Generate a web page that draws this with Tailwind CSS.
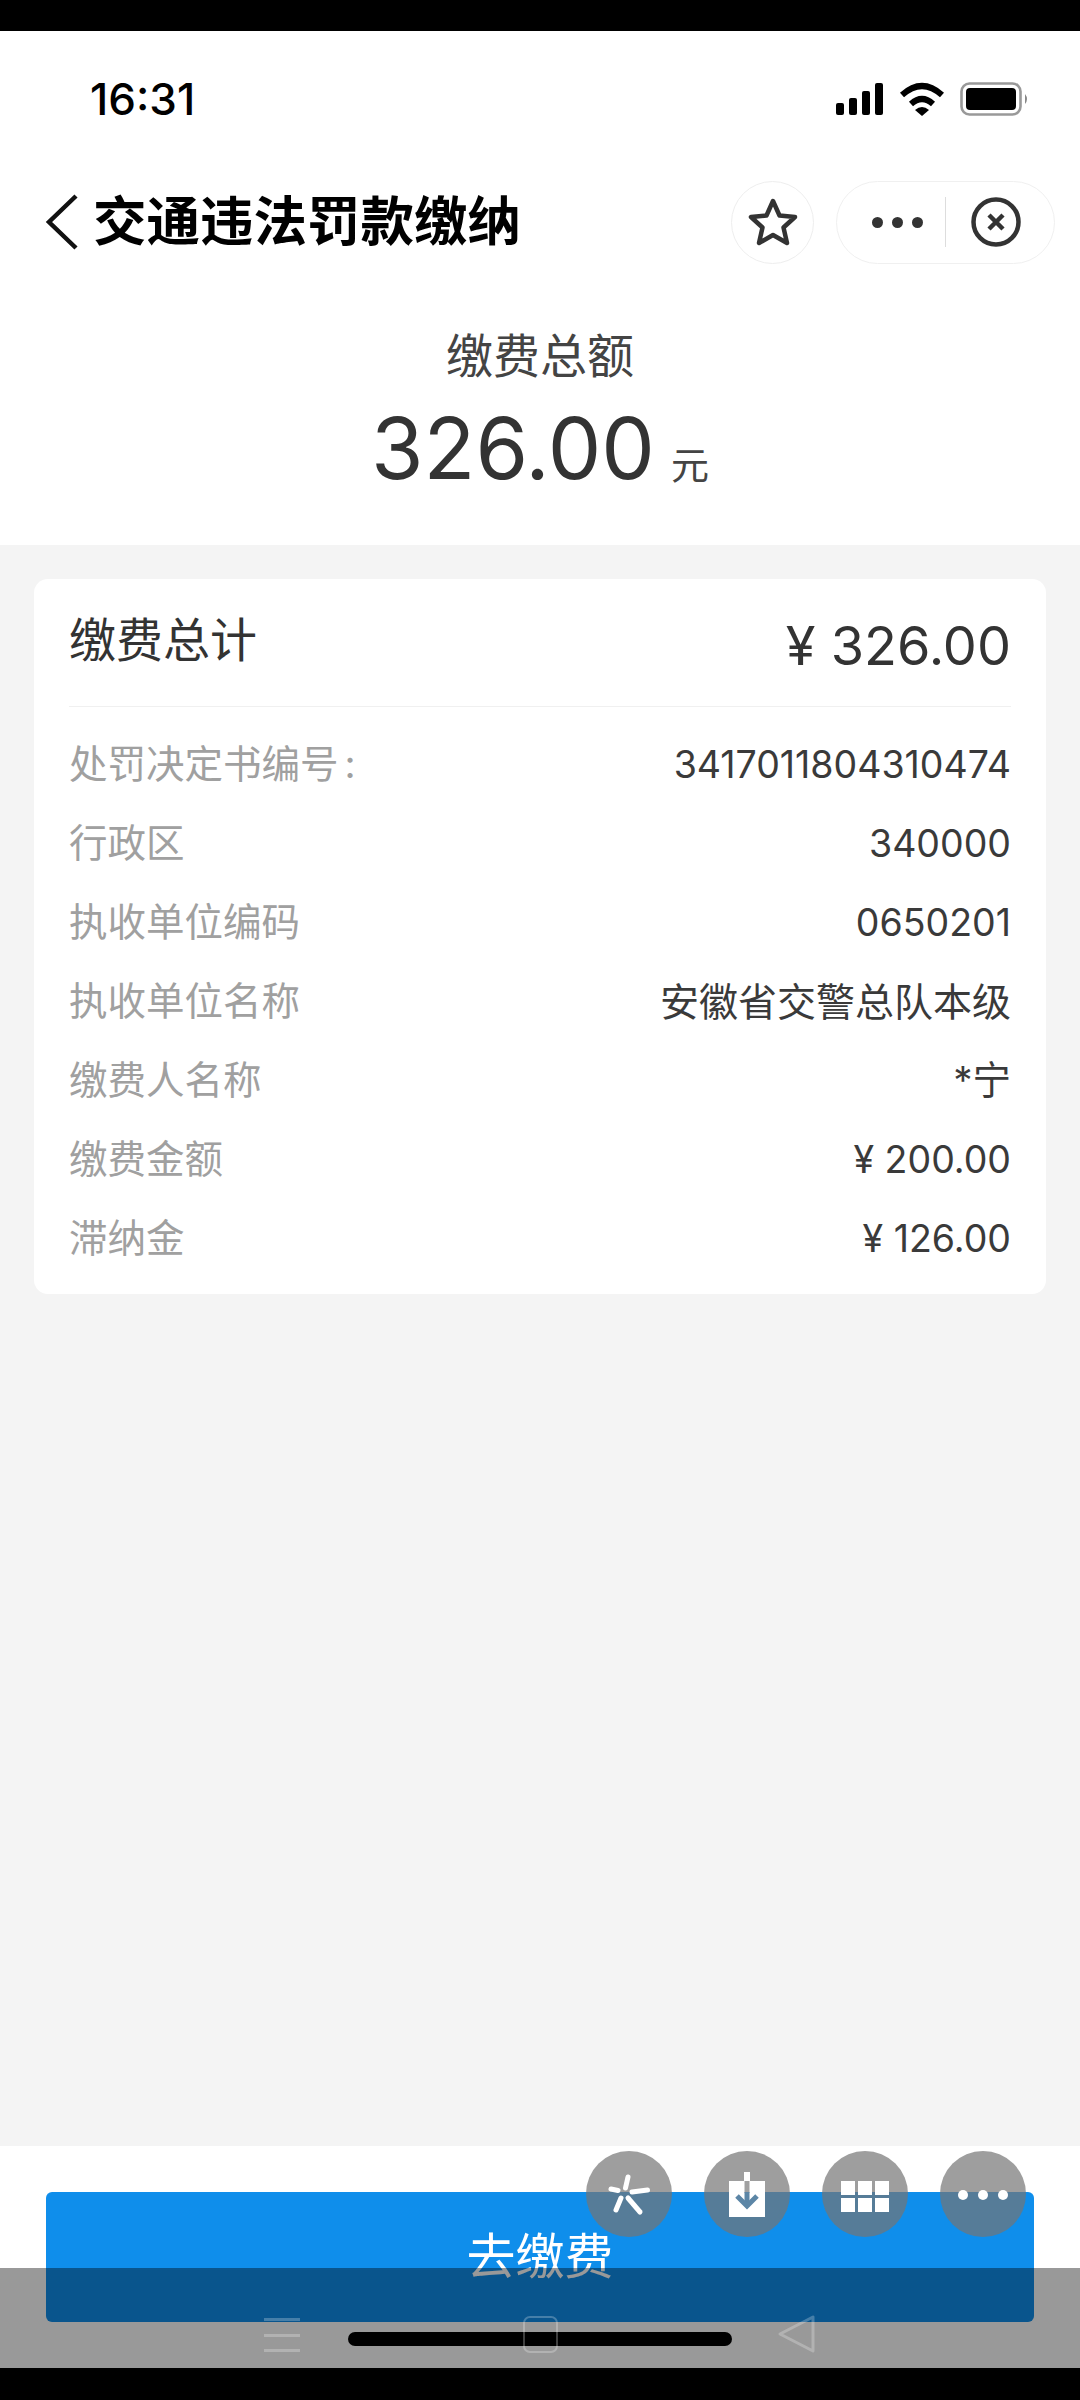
<!DOCTYPE html>
<html><head><meta charset="utf-8"><script src="https://cdn.jsdelivr.net/npm/@tailwindcss/browser@4"></script></head>
<body class="m-0 bg-black">
<div class="relative w-[1080px] h-[2400px] bg-black overflow-hidden font-['Inter','Noto_Sans_CJK_SC',sans-serif]">
  <div class="h-[31px] bg-black"></div>
  <div class="flex flex-col h-[2337px] bg-[#f4f4f4]">
    <div class="bg-white h-[514px] flex flex-col shrink-0">
      <div class="flex items-center justify-between h-[136px] pl-[90px] pr-[51px]">
        <span class="text-[44px] font-medium text-black">16:31</span>
        <div class="flex items-center gap-[15px]">
          <svg width="48" height="32" viewBox="0 0 48 32"><g fill="#000"><rect x="0" y="20" width="8" height="12" rx="2"/><rect x="13" y="15" width="8" height="17" rx="2"/><rect x="26" y="8" width="8" height="24" rx="2"/><rect x="39" y="0" width="8" height="32" rx="2"/></g></svg>
          <svg width="46" height="34" viewBox="0 0 46 34"><g fill="none" stroke="#000" stroke-width="6"><path d="M3 13 Q23 -5 43 13"/><path d="M12 22 Q23 12 34 22"/></g><path d="M16 28 Q23 22 30 28 L23 34Z" fill="#000"/></svg>
          <svg width="69" height="34" viewBox="0 0 69 34"><rect x="1.5" y="1.5" width="59" height="31" rx="8" fill="none" stroke="#999" stroke-width="2.6"/><rect x="6" y="6" width="50" height="22" rx="4" fill="#000"/><path d="M65 12 Q69 17 65 22Z" fill="#888"/></svg>
        </div>
      </div>
      <div class="flex items-center justify-between h-[110px] pl-[44px] pr-[25px]">
        <div class="flex items-center gap-[13px]">
          <svg width="36" height="56" viewBox="0 0 36 56"><path d="M32 2 L5 28 L32 54" fill="none" stroke="#111" stroke-width="4.5"/></svg>
          <span class="text-[53.5px] font-bold text-black leading-none">交通违法罚款缴纳</span>
        </div>
        <div class="flex items-center gap-[22px]">
          <div class="w-[83px] h-[83px] rounded-full border border-[#eeeeee] flex items-center justify-center">
            <svg width="52" height="50" viewBox="0 0 52 50"><path d="M26 4 L32.5 18.5 L48 20 L36.5 30.5 L40 46 L26 38 L12 46 L15.5 30.5 L4 20 L19.5 18.5 Z" fill="none" stroke="#333" stroke-width="4.5" stroke-linejoin="round"/></svg>
          </div>
          <div class="w-[219px] h-[83px] rounded-full border border-[#f0f0f0] flex items-center">
            <div class="w-[108px] pl-[13px] flex justify-center gap-[9px]"><i class="w-[11px] h-[11px] rounded-full bg-[#333]"></i><i class="w-[11px] h-[11px] rounded-full bg-[#333]"></i><i class="w-[11px] h-[11px] rounded-full bg-[#333]"></i></div>
            <div class="w-px h-[50px] bg-[#dddddd]"></div>
            <div class="flex-1 flex justify-center pr-[8px]">
              <svg width="50" height="50" viewBox="0 0 50 50"><circle cx="25" cy="25" r="22.5" fill="none" stroke="#333" stroke-width="4.5"/><path d="M18 18 L32 32 M32 18 L18 32" stroke="#333" stroke-width="4.5"/></svg>
            </div>
          </div>
        </div>
      </div>
      <div class="flex flex-col items-center mt-[48px]">
        <div class="text-[47px] leading-[62px] text-[#444]">缴费总额</div>
        <div class="flex items-baseline gap-[16px] mt-[16px]">
          <span class="text-[85px] leading-[92px] text-[#333]">326.00</span>
          <span class="text-[38px] text-[#444]">元</span>
        </div>
      </div>
    </div>
    <div class="mx-[34px] mt-[34px] w-[1012px] h-[715px] bg-white rounded-[14px] px-[35px] shrink-0">
      <div class="flex justify-between items-center h-[128px] border-b border-[#f0f0f0]">
        <span class="text-[47px] text-[#333] -mt-[4px]">缴费总计</span>
        <span class="text-[54px] text-[#333] mt-[6px]">¥ 326.00</span>
      </div>
      <div class="flex flex-col mt-[18px] text-[38.5px] leading-[79px]">
        <div class="flex justify-between"><span class="text-[#a0a0a0]">处罚决定书编号<span class="ml-[6px]">:</span></span><span class="text-[37.5px] text-[#3a3a3a]">3417011804310474</span></div>
        <div class="flex justify-between"><span class="text-[#a0a0a0]">行政区</span><span class="text-[37.5px] text-[#3a3a3a]">340000</span></div>
        <div class="flex justify-between"><span class="text-[#a0a0a0]">执收单位编码</span><span class="text-[37.5px] text-[#3a3a3a]">0650201</span></div>
        <div class="flex justify-between"><span class="text-[#a0a0a0]">执收单位名称</span><span class="text-[39px] text-[#3a3a3a]">安徽省交警总队本级</span></div>
        <div class="flex justify-between"><span class="text-[#a0a0a0]">缴费人名称</span><span class="text-[#3a3a3a]">*宁</span></div>
        <div class="flex justify-between"><span class="text-[#a0a0a0]">缴费金额</span><span class="text-[37.5px] text-[#3a3a3a]">¥ 200.00</span></div>
        <div class="flex justify-between"><span class="text-[#a0a0a0]">滞纳金</span><span class="text-[37.5px] text-[#3a3a3a]">¥ 126.00</span></div>
      </div>
    </div>
    <div class="flex-1"></div>
    <div class="bg-white h-[222px] px-[46px] pt-[46px] shrink-0">
      <div class="h-[130px] rounded-[6px] bg-[#0f8eeb] flex items-center justify-center text-white text-[49px]">去缴费</div>
    </div>
  </div>
  <!-- overlays -->
  <div class="absolute left-0 top-[2268px] w-[1080px] h-[100px] bg-black/40"></div>
  <div class="absolute left-[348px] top-[2332px] w-[384px] h-[14px] rounded-full bg-black"></div>
  <div class="absolute left-[264px] top-[2318px] w-[36px] h-[34px] flex flex-col justify-between">
    <i class="block h-[3px] bg-white/25"></i><i class="block h-[3px] bg-white/25"></i><i class="block h-[3px] bg-white/25"></i>
  </div>
  <div class="absolute left-[523px] top-[2316px] w-[35px] h-[37px] rounded-[7px] border-2 border-white/25"></div>
  <svg class="absolute left-[776px] top-[2314px]" width="40" height="40" viewBox="0 0 40 40"><path d="M37 3 L37 37 L4 20 Z" fill="none" stroke="#fff" stroke-opacity=".25" stroke-width="3" stroke-linejoin="round"/></svg>
  <div class="absolute left-[586px] top-[2151px] w-[86px] h-[86px] rounded-full bg-[#757575]/70 flex items-center justify-center">
    <svg width="46" height="46" viewBox="-23 -23 46 46"><g stroke="#fff" stroke-width="5" stroke-linecap="round"><path d="M-1 -17 L-3.5 -6"/><path d="M-18 -5 L-11 -3.5"/><path d="M18.5 -4 L3 -2"/><path d="M-8 4 L-13 16"/><path d="M-1 4 L11 18"/></g></svg>
  </div>
  <div class="absolute left-[704px] top-[2151px] w-[86px] h-[86px] rounded-full bg-[#757575]/70 flex items-center justify-center">
    <svg class="mt-[4px]" width="38" height="48" viewBox="0 0 38 48"><path d="M1 9 H16 V0 H22 V9 H37 V45 H1 Z" fill="#fff"/><path d="M19 9 V21" stroke="#a0a0a0" stroke-width="5"/><path d="M19 20 V33" stroke="#5c86a6" stroke-width="5"/><path d="M9 24 L19 34 L29 24" fill="none" stroke="#5c86a6" stroke-width="5"/></svg>
  </div>
  <div class="absolute left-[822px] top-[2151px] w-[86px] h-[86px] rounded-full bg-[#757575]/70 flex items-center justify-center pt-[4px]">
    <div class="grid grid-cols-3 gap-[3px]"><i class="block w-[14px] h-[14px] bg-white"></i><i class="block w-[14px] h-[14px] bg-white"></i><i class="block w-[14px] h-[14px] bg-white"></i><i class="block w-[14px] h-[14px] bg-white"></i><i class="block w-[14px] h-[14px] bg-white"></i><i class="block w-[14px] h-[14px] bg-white"></i></div>
  </div>
  <div class="absolute left-[940px] top-[2151px] w-[86px] h-[86px] rounded-full bg-[#757575]/70 flex items-center justify-center gap-[10px] pt-[2px]">
    <i class="w-[10px] h-[10px] rounded-full bg-white"></i><i class="w-[10px] h-[10px] rounded-full bg-white"></i><i class="w-[10px] h-[10px] rounded-full bg-white"></i>
  </div>
</div>
</body></html>
